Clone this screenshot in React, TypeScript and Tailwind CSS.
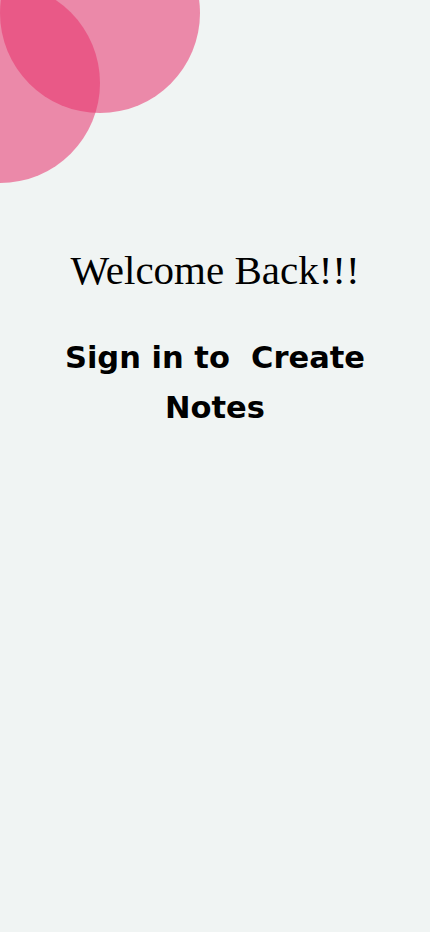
export default function App() {
  return (
    <div className="relative min-h-[932px] w-full overflow-hidden bg-[#f0f4f3]">
      {/* decorative circles */}
      <div className="absolute left-0 top-[-87px] h-[200px] w-[200px] rounded-full bg-[#e8326c]/55" />
      <div className="absolute left-[-100px] top-[-17px] h-[200px] w-[200px] rounded-full bg-[#e8326c]/55" />

      <main className="relative flex flex-col items-center pt-[245px]">
        <h1 className="text-[41px] leading-[50px] text-black [font-family:'Liberation_Serif',serif]">
          Welcome Back!!!
        </h1>
        <h2 className="mt-[38px] w-[340px] whitespace-pre-wrap text-center text-[30.5px] font-bold leading-[50px] text-black [font-family:'DejaVu_Sans',sans-serif]">
          {"Sign in to  Create Notes"}
        </h2>
      </main>
    </div>
  );
}
